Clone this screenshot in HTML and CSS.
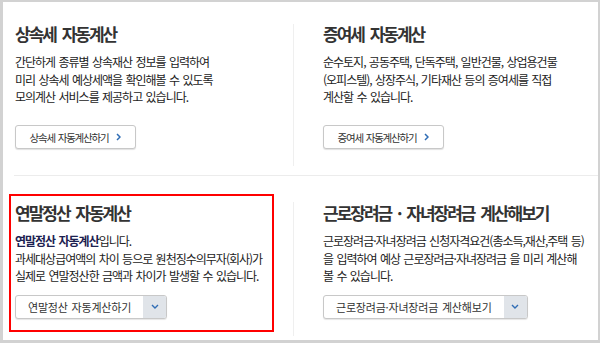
FILE: index.html
```html
<!DOCTYPE html>
<html lang="ko">
<head>
<meta charset="utf-8">
<link rel="stylesheet" href="styles.css">
</head>
<body>
<div class="frame">
  <div class="row row-top">
    <section class="cell cell-left">
      <h2 class="title">상속세 자동계산</h2>
      <p class="desc">간단하게 종류별 상속재산 정보를 입력하여<br>미리 상속세 예상세액을 확인해볼 수 있도록<br>모의계산 서비스를 제공하고 있습니다.</p>
      <a class="btn" href="#">상속세 자동계산하기<svg class="chev" width="5" height="8" viewBox="0 0 5 8"><path d="M1 1l3 3-3 3" fill="none" stroke="#2f6db5" stroke-width="1.5"/></svg></a>
    </section>
    <section class="cell cell-right">
      <h2 class="title">증여세 자동계산</h2>
      <p class="desc">순수토지, 공동주택, 단독주택, 일반건물, 상업용건물<br>(오피스텔), 상장주식, 기타재산 등의 증여세를 직접<br>계산할 수 있습니다.</p>
      <a class="btn" href="#">증여세 자동계산하기<svg class="chev" width="5" height="8" viewBox="0 0 5 8"><path d="M1 1l3 3-3 3" fill="none" stroke="#2f6db5" stroke-width="1.5"/></svg></a>
    </section>
  </div>
  <div class="row row-bottom">
    <section class="cell cell-hl">
      <h2 class="title">연말정산 자동계산</h2>
      <p class="desc"><strong class="em">연말정산 자동계산</strong>입니다.<br>과세대상급여액의 차이 등으로 원천징수의무자(회사)가<br>실제로 연말정산한 금액과 차이가 발생할 수 있습니다.</p>
      <div class="select"><span class="select-label">연말정산 자동계산하기</span><span class="select-arrow"><svg width="8" height="5" viewBox="0 0 8 5"><path d="M1 1l3 3 3-3" fill="none" stroke="#2f6db5" stroke-width="1.4"/></svg></span></div>
    </section>
    <section class="cell cell-right cell-right-bottom">
      <h2 class="title">근로장려금 · 자녀장려금 계산해보기</h2>
      <p class="desc">근로장려금·자녀장려금 신청자격요건(총소득,재산,주택 등)<br>을 입력하여 예상 근로장려금·자녀장려금 을 미리 계산해<br>볼 수 있습니다.</p>
      <div class="select"><span class="select-label">근로장려금·자녀장려금 계산해보기</span><span class="select-arrow"><svg width="8" height="5" viewBox="0 0 8 5"><path d="M1 1l3 3 3-3" fill="none" stroke="#2f6db5" stroke-width="1.4"/></svg></span></div>
    </section>
  </div>
</div>
</body>
</html>
```
FILE: styles.css
```css
* { box-sizing: border-box; margin: 0; padding: 0; }
html, body { background: #fff; }
body { font-family: "Noto Sans CJK KR", "Noto Sans", sans-serif; color: #222; }

.frame {
  width: 600px;
  height: 343px;
  border-style: solid;
  border-color: #d2d2d2;
  border-width: 2px 2px 3px 3px;
}

.row-top {
  display: flex;
  height: 174px;
  margin-left: 11px;
  padding: 22px 0 9px;
  border-bottom: 1px solid #ececec;
}
.cell-left { width: 279px; padding-left: 1px; }
.cell-right { flex: 1; border-left: 1px solid #efefef; padding-left: 29px; }

.title {
  font-size: 17px;
  line-height: 20px;
  font-weight: 700;
  color: #333;
  letter-spacing: -2px;
  word-spacing: 3px;
  white-space: nowrap;
}
.desc {
  margin-top: 9px;
  font-size: 12px;
  line-height: 17.5px;
  letter-spacing: -1px;
  word-spacing: 1px;
  color: #222;
  white-space: nowrap;
}
.em { font-weight: 700; color: #1c2150; }

.btn {
  margin-top: 19.5px;
  display: flex;
  align-items: center;
  justify-content: center;
  gap: 8px;
  width: 121px;
  height: 24px;
  border: 1px solid #c8c8c8;
  border-radius: 3px;
  box-shadow: 0 1px 1px rgba(0,0,0,.12);
  background: #fff;
  font-size: 10.5px;
  letter-spacing: -1.2px;
  word-spacing: 1px;
  color: #333;
  text-decoration: none;
  white-space: nowrap;
}
.chev { display: block; }

.row-bottom {
  display: grid;
  grid-template-columns: 290px 1fr;
  height: 164px;
}
.cell-hl {
  margin: 18px 0 0 6px;
  width: 265px;
  height: 138px;
  border: 2px solid #f00;
  padding: 7px 0 0 4px;
}
.cell-right-bottom {
  margin: 26px 0 4px;
  padding-top: 1px;
}

.select {
  margin-top: 10px;
  display: inline-flex;
  height: 24px;
  border: 1px solid #c8c8c8;
  border-radius: 3px;
  overflow: hidden;
  box-shadow: 0 1px 1px rgba(0,0,0,.1);
  background: #fff;
}
.select-label {
  display: flex;
  align-items: center;
  padding: 0 12px;
  font-size: 11px;
  letter-spacing: -0.2px;
  word-spacing: 1px;
  color: #333;
  white-space: nowrap;
}
.select-arrow {
  width: 23px;
  display: flex;
  align-items: center;
  justify-content: center;
  background: #e0e4e9;
}
.select-arrow svg { display: block; }
```
